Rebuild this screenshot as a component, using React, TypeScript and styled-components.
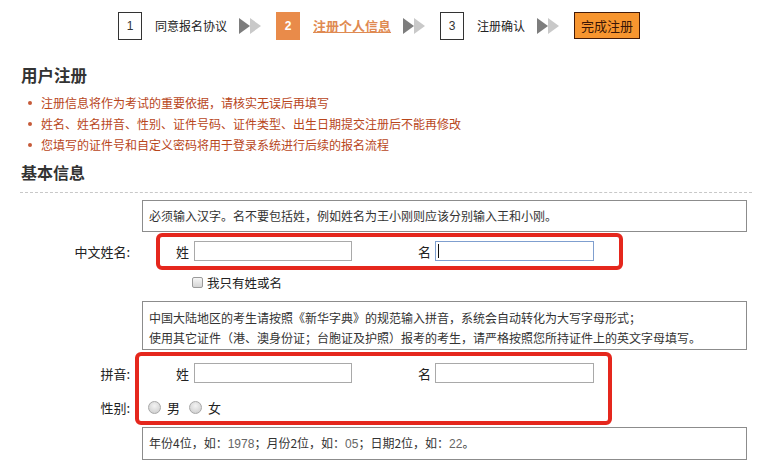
import styled, { createGlobalStyle } from 'styled-components'

const GlobalStyle = createGlobalStyle`
  body {
    margin: 0;
    background: #fff;
    font-family: "Noto Sans CJK SC", "Noto Sans", sans-serif;
    color: #333;
  }
`

const steps = [
  { num: '1', label: '同意报名协议' },
  { num: '2', label: '注册个人信息', active: true },
  { num: '3', label: '注册确认' },
]

const notes = [
  '注册信息将作为考试的重要依据，请核实无误后再填写',
  '姓名、姓名拼音、性别、证件号码、证件类型、出生日期提交注册后不能再修改',
  '您填写的证件号和自定义密码将用于登录系统进行后续的报名流程',
]

function StepArrow() {
  return (
    <StyledArrow width="23" height="18" viewBox="0 0 23 18">
      <polygon points="0,1 11,9 0,17" fill="#7d7d7d" />
      <polygon points="11,1 22,9 11,17" fill="#c9c9c9" />
    </StyledArrow>
  )
}

function App() {
  return (
    <StyledPage>
      <GlobalStyle />
      <StyledStepBar>
        {steps.map((s) => (
          <StyledStep key={s.num}>
            <StyledStepNum $active={s.active}>{s.num}</StyledStepNum>
            <StyledStepText $active={s.active}>{s.label}</StyledStepText>
            <StepArrow />
          </StyledStep>
        ))}
        <StyledFinish>完成注册</StyledFinish>
      </StyledStepBar>

      <StyledSection>
        <StyledTitle>用户注册</StyledTitle>
        <StyledNotes>
          {notes.map((n) => (
            <li key={n}>{n}</li>
          ))}
        </StyledNotes>
        <StyledSubTitle>基本信息</StyledSubTitle>
      </StyledSection>
      <StyledDivider />

      <StyledForm>
        <StyledHint>必须输入汉字。名不要包括姓，例如姓名为王小刚则应该分别输入王和小刚。</StyledHint>
        <StyledRow $height={38}>
          <StyledRowLabel>中文姓名:</StyledRowLabel>
          <StyledSubLabel $width={64}>姓</StyledSubLabel>
          <StyledInput type="text" $width={158} />
          <StyledSubLabel $width={83} $pad={4}>名</StyledSubLabel>
          <StyledInputWrap>
            <StyledInput type="text" $width={159} $focused />
            <StyledCaret />
          </StyledInputWrap>
          <StyledHighlight style={{ left: 156, top: 1, width: 467, height: 37 }} />
        </StyledRow>
        <StyledCheckRow>
          <StyledCheckbox />
          <span>我只有姓或名</span>
        </StyledCheckRow>

        <StyledHint $multi>
          <div>中国大陆地区的考生请按照《新华字典》的规范输入拼音，系统会自动转化为大写字母形式；</div>
          <div>使用其它证件（港、澳身份证；台胞证及护照）报考的考生，请严格按照您所持证件上的英文字母填写。</div>
        </StyledHint>
        <StyledGroup>
          <StyledRow $height={46}>
            <StyledRowLabel>拼音:</StyledRowLabel>
            <StyledSubLabel $width={64}>姓</StyledSubLabel>
            <StyledInput type="text" $width={158} />
            <StyledSubLabel $width={83} $pad={4}>名</StyledSubLabel>
            <StyledInput type="text" $width={159} />
          </StyledRow>
          <StyledRow $height={22}>
            <StyledRowLabel>性别:</StyledRowLabel>
            <StyledRadio $first />
            <StyledRadioText>男</StyledRadioText>
            <StyledRadio />
            <StyledRadioText>女</StyledRadioText>
          </StyledRow>
          <StyledHighlight style={{ left: 135, top: 2, width: 477, height: 73 }} />
        </StyledGroup>

        <StyledHint $gap={9}>
          年份4位，如：<StyledNum>1978</StyledNum>；月份2位，如：<StyledNum>05</StyledNum>；日期2位，如：
          <StyledNum>22</StyledNum>。
        </StyledHint>
      </StyledForm>
    </StyledPage>
  )
}

const StyledPage = styled.div`
  width: 772px;
  height: 467px;
  overflow: hidden;
`
const StyledStepBar = styled.div`
  display: flex;
  align-items: center;
  padding: 12px 0 0 118px;
  height: 28px;
`
const StyledStep = styled.div`
  display: flex;
  align-items: center;
`
const StyledStepNum = styled.div<{ $active?: boolean }>`
  width: 24px;
  height: 28px;
  box-sizing: border-box;
  display: flex;
  align-items: center;
  justify-content: center;
  font-family: "Liberation Sans", Arial, sans-serif;
  font-size: 12px;
  font-weight: ${(p) => (p.$active ? 700 : 400)};
  color: ${(p) => (p.$active ? '#fff' : '#333')};
  background: ${(p) => (p.$active ? '#e98b4a' : '#fff')};
  border: ${(p) => (p.$active ? 'none' : '1px solid #333')};
`
const StyledStepText = styled.span<{ $active?: boolean }>`
  margin-left: 13px;
  font-size: ${(p) => (p.$active ? '13px' : '12px')};
  font-weight: ${(p) => (p.$active ? 700 : 400)};
  color: ${(p) => (p.$active ? '#df8a52' : '#222')};
  text-decoration: ${(p) => (p.$active ? 'underline' : 'none')};
  line-height: 28px;
`
const StyledArrow = styled.svg`
  margin: 0 14px 0 12px;
  display: block;
`
const StyledFinish = styled.button`
  width: 66px;
  height: 27px;
  padding: 0;
  margin-top: -1px;
  background: #f7952f;
  border: 1px solid #431a08;
  color: #3a1606;
  font-family: inherit;
  font-size: 13px;
`
const StyledSection = styled.div`
  padding-left: 21px;
`
const StyledTitle = styled.h2`
  margin: 25px 0 0;
  font-size: 16.5px;
  line-height: 20px;
  font-weight: 700;
  color: #333;
`
const StyledNotes = styled.ul`
  margin: 7px 0 0;
  padding: 0;
  list-style: none;

  li {
    display: flex;
    align-items: center;
    padding-left: 7px;
    font-size: 12px;
    line-height: 21px;
    color: #b8461b;
  }
  li::before {
    content: '';
    width: 4px;
    height: 4px;
    border-radius: 50%;
    background: #c65a38;
    margin-right: 9px;
  }
`
const StyledSubTitle = styled.h3`
  margin: 7px 0 0;
  font-size: 16px;
  line-height: 20px;
  font-weight: 700;
  color: #333;
`
const StyledDivider = styled.div`
  margin: 10px 20px 0;
  border-top: 1px dashed #c8c8c8;
`
const StyledForm = styled.div`
  margin-top: 7px;
`
const StyledHint = styled.div<{ $multi?: boolean; $gap?: number }>`
  margin: ${(p) => p.$gap ?? 0}px 0 0 142px;
  width: 605px;
  box-sizing: border-box;
  border: 1px solid #8c8c8c;
  padding: ${(p) => (p.$multi ? '6px 6px 1px' : '0 6px')};
  font-size: 12px;
  line-height: ${(p) => (p.$multi ? '20px' : '30px')};
  color: #333;
  white-space: nowrap;
  ${(p) => (p.$multi ? 'margin-top: 7px;' : '')}
`
const StyledNum = styled.span`
  font-family: "Liberation Sans", Arial, sans-serif;
  color: #666;
  font-size: 12px;
`
const StyledRow = styled.div<{ $height: number }>`
  position: relative;
  display: flex;
  align-items: center;
  height: ${(p) => p.$height}px;
  font-size: 13px;
  color: #222;
`
const StyledGroup = styled.div`
  position: relative;
`
const StyledRowLabel = styled.div`
  width: 130px;
  text-align: right;
  flex-shrink: 0;
`
const StyledSubLabel = styled.div<{ $width: number; $pad?: number }>`
  width: ${(p) => p.$width}px;
  box-sizing: border-box;
  padding-right: ${(p) => p.$pad ?? 5}px;
  text-align: right;
  flex-shrink: 0;
`
const StyledInputWrap = styled.div`
  position: relative;
  display: flex;
`
const StyledInput = styled.input<{ $width: number; $focused?: boolean }>`
  width: ${(p) => p.$width}px;
  height: 20px;
  box-sizing: border-box;
  margin: 0;
  padding: 0 3px;
  border: 1px solid ${(p) => (p.$focused ? '#7f9fcf' : '#a9a9a9')};
  outline: none;
  background: #fff;
`
const StyledCaret = styled.span`
  position: absolute;
  left: 3px;
  top: 3px;
  width: 1px;
  height: 14px;
  background: #111;
`
const StyledHighlight = styled.div`
  position: absolute;
  box-sizing: border-box;
  border: 4px solid #e5271d;
  border-radius: 6px;
  pointer-events: none;
`
const StyledCheckRow = styled.div`
  display: flex;
  align-items: center;
  height: 24px;
  padding-left: 192px;
  font-size: 12.5px;
  color: #222;
`
const StyledCheckbox = styled.span`
  width: 11px;
  height: 11px;
  box-sizing: border-box;
  border: 1px solid #9a9a9a;
  border-radius: 2px;
  background: linear-gradient(#f6f6f6, #d4d4d4);
  margin-right: 4px;
`
const StyledRadio = styled.span<{ $first?: boolean }>`
  width: 13px;
  height: 13px;
  box-sizing: border-box;
  border: 1px solid #a8a8a8;
  border-radius: 50%;
  background: radial-gradient(circle at 50% 35%, #f3f3f3, #c9c9c9);
  margin-left: ${(p) => (p.$first ? 18 : 9)}px;
  margin-right: 6px;
`
const StyledRadioText = styled.span`
  font-size: 13px;
  color: #222;
`

export default App
